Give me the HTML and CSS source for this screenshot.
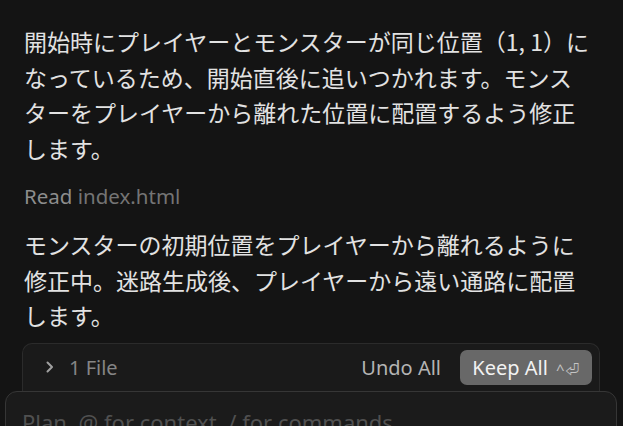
FILE: index.html
```html
<!DOCTYPE html>
<html lang="ja">

<head>
    <meta charset="UTF-8">
    <meta name="viewport" content="width=device-width, initial-scale=1.0">
    <title>Chat</title>
    <link rel="stylesheet" href="styles.css">
</head>

<body>
    <div class="chat">
        <p class="msg">開始時にプレイヤーとモンスターが同じ位置（1, 1）になっているため、開始直後に追いつかれます。モンスターをプレイヤーから離れた位置に配置するよう修正します。</p>
        <div class="tool"><span class="tool-name">Read</span> <span class="tool-file">index.html</span></div>
        <p class="msg">モンスターの初期位置をプレイヤーから離れるように修正中。迷路生成後、プレイヤーから遠い通路に配置します。</p>
    </div>

    <div class="changes">
        <div class="files">
            <svg class="chevron" width="10" height="14" viewBox="0 0 10 14">
                <path d="M2.5 2.5 L7 7 L2.5 11.5" fill="none" stroke="#a0a0a0" stroke-width="2" stroke-linecap="round" stroke-linejoin="round"/>
            </svg>
            <span>1 File</span>
        </div>
        <button class="undo">Undo All</button>
        <button class="keep">Keep All <span class="kbd">^⏎</span></button>
    </div>

    <div class="input-box">
        <div class="placeholder">Plan, @ for context, / for commands</div>
    </div>
</body>

</html>
```

FILE: styles.css
```css
* {
    box-sizing: border-box;
}

body {
    margin: 0;
    height: 426px;
    overflow: hidden;
    background-color: #141414;
    font-family: "Noto Sans", "Noto Sans CJK JP", sans-serif;
}

.chat {
    padding: 24px 29px 0 24px;
}

.msg {
    margin: 0;
    font-family: "Noto Sans CJK JP", sans-serif;
    font-size: 23px;
    line-height: 35.5px;
    color: #e2e2e2;
    text-spacing-trim: space-all;
}

.tool {
    margin: 17px 0 18px;
    font-size: 20.5px;
    line-height: 26px;
}

.tool-name {
    color: #8d8d8d;
}

.tool-file {
    color: #747474;
}

.changes {
    display: flex;
    align-items: flex-start;
    height: 48px;
    margin: 9px 23px 0 22px;
    padding: 6px 7px 0 22px;
    background-color: #1a1a1a;
    border: 1px solid #2b2b2b;
    border-bottom: none;
    border-radius: 10px 10px 0 0;
}

.files {
    flex: auto;
    display: flex;
    align-items: center;
    gap: 14px;
    height: 35px;
    font-size: 20px;
    color: #858585;
}

.changes button {
    font-family: "Noto Sans", sans-serif;
    font-size: 20px;
    height: 35px;
    border: none;
    background: none;
    padding: 0;
}

.undo {
    color: #b4b4b4;
    margin-right: 19px;
}

.keep {
    width: 132px;
    background-color: #686868 !important;
    color: #f2f2f2;
    border-radius: 7px;
}

.kbd {
    font-size: 15px;
    color: #c4c4c4;
    margin-left: 3px;
}

.input-box {
    margin: 0 6px 0 5px;
    height: 60px;
    padding: 15px 16px;
    background-color: #1b1b1b;
    border: 1px solid #363636;
    border-radius: 12px;
}

.placeholder {
    font-size: 22px;
    color: #505050;
}
```
